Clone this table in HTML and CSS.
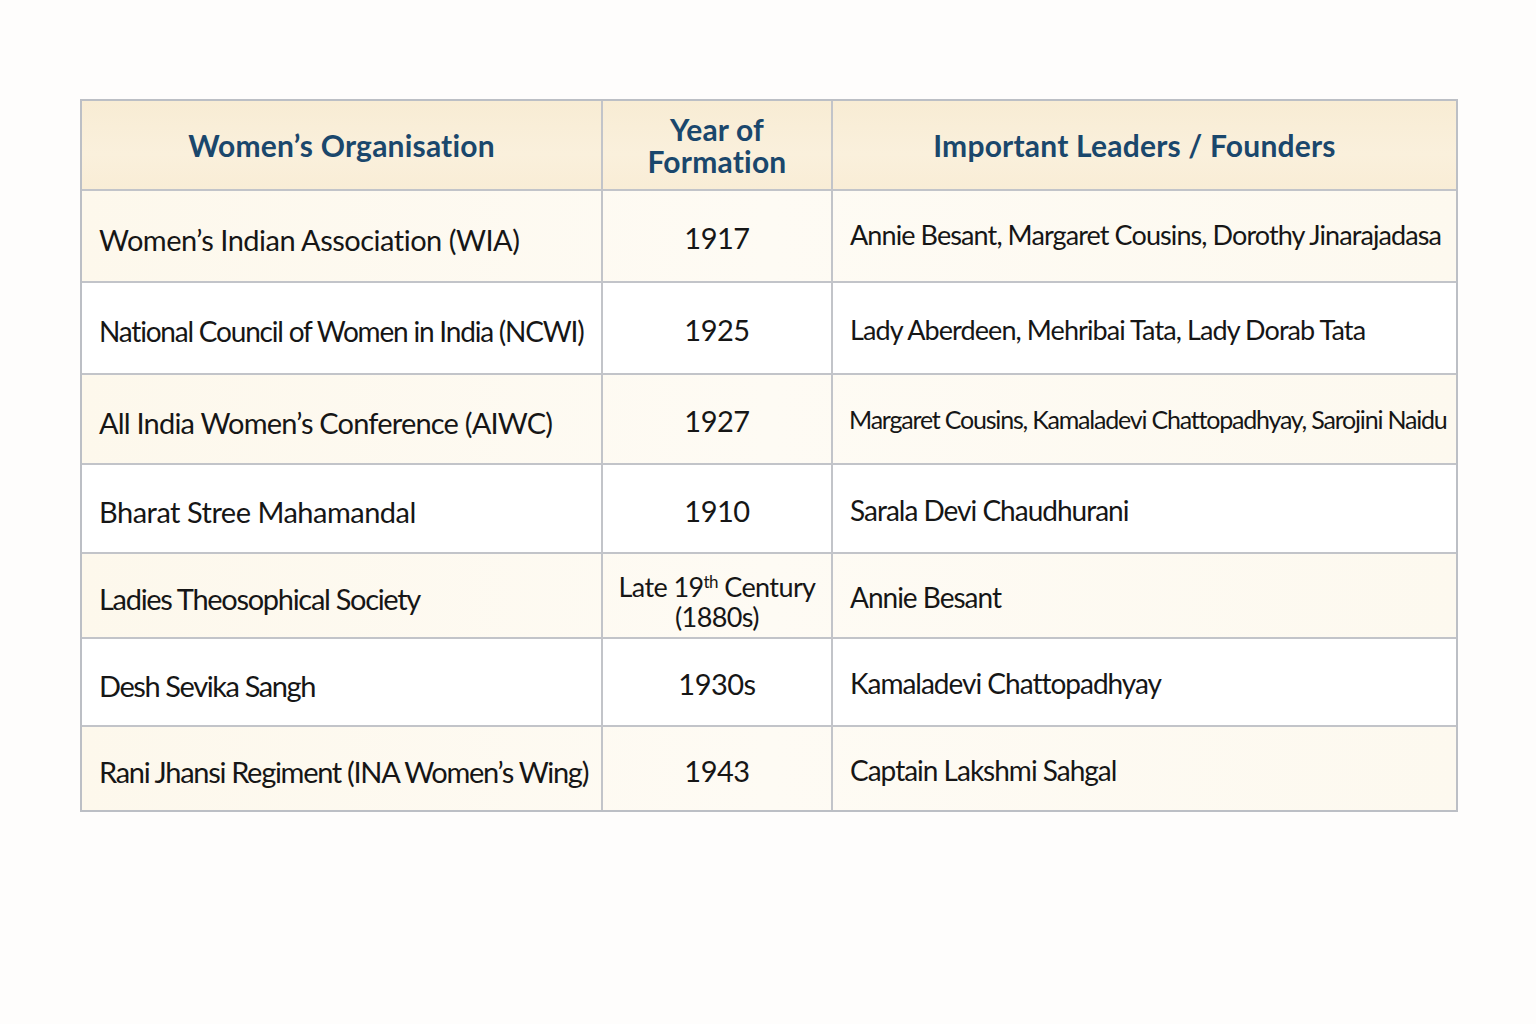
FILE: index.html
```html
<!DOCTYPE html>
<html lang="en">
<head>
<meta charset="utf-8">
<title>Women's Organisations</title>
<link rel="stylesheet" href="styles.css">
</head>
<body>
<div class="page">
  <div class="table">
    <div class="row head">
      <div class="cell c1"><span>Women’s Organisation</span></div>
      <div class="cell c2"><div class="stack"><span class="ln">Year of</span><span class="ln">Formation</span></div></div>
      <div class="cell c3"><span>Important Leaders / Founders</span></div>
    </div>
    <div class="row odd r1">
      <div class="cell c1"><span>Women’s Indian Association (WIA)</span></div>
      <div class="cell c2"><span>1917</span></div>
      <div class="cell c3 up cmp"><span>Annie Besant, Margaret Cousins, Dorothy Jinarajadasa</span></div>
    </div>
    <div class="row r2">
      <div class="cell c1 narrow"><span>National Council of Women in India (NCWI)</span></div>
      <div class="cell c2"><span>1925</span></div>
      <div class="cell c3 cmp"><span>Lady Aberdeen, Mehribai Tata, Lady Dorab Tata</span></div>
    </div>
    <div class="row odd r3">
      <div class="cell c1 t08"><span>All India Women’s Conference (AIWC)</span></div>
      <div class="cell c2"><span>1927</span></div>
      <div class="cell c3 small"><span>Margaret Cousins, Kamaladevi Chattopadhyay, Sarojini Naidu</span></div>
    </div>
    <div class="row r4">
      <div class="cell c1"><span>Bharat Stree Mahamandal</span></div>
      <div class="cell c2"><span>1910</span></div>
      <div class="cell c3"><span>Sarala Devi Chaudhurani</span></div>
    </div>
    <div class="row odd r5">
      <div class="cell c1 t13"><span>Ladies Theosophical Society</span></div>
      <div class="cell c2 two"><span>Late 19<sup>th</sup> Century<br>(1880s)</span></div>
      <div class="cell c3"><span>Annie Besant</span></div>
    </div>
    <div class="row r6">
      <div class="cell c1 t14"><span>Desh Sevika Sangh</span></div>
      <div class="cell c2"><span>1930s</span></div>
      <div class="cell c3"><span>Kamaladevi Chattopadhyay</span></div>
    </div>
    <div class="row odd r7">
      <div class="cell c1 t13"><span>Rani Jhansi Regiment (INA Women’s Wing)</span></div>
      <div class="cell c2"><span>1943</span></div>
      <div class="cell c3"><span>Captain Lakshmi Sahgal</span></div>
    </div>
  </div>
</div>
</body>
</html>
```
FILE: styles.css
```css
html, body {
  margin: 0;
  padding: 0;
  background: #fefdfc;
}
.page {
  width: 1536px;
  height: 1024px;
  padding: 99px 0 0 80px;
  box-sizing: border-box;
  font-family: Lato, "Open Sans", sans-serif;
  color: #161616;
}
.table {
  width: 1378px;
  border: 2px solid #bcbfc5;
  box-sizing: border-box;
}
.row {
  display: grid;
  grid-template-columns: 521px 230px 1fr;
  border-top: 2px solid #c2c4c9;
  background: #ffffff;
}
.row.head {
  border-top: none;
  height: 88px;
  background: linear-gradient(180deg, #f8ecd4 0%, #faf0dc 60%, #f9edd6 100%);
}
.row.odd {
  background: linear-gradient(90deg, #fdf8ec 0%, #fefbf4 50%, #fdf9ef 100%);
}
.r1 { height: 90px; }
.r2 { height: 90px; }
.r3 { height: 88px; }
.r4 { height: 87px; }
.r5 { height: 83px; }
.r6 { height: 86px; }
.r7 { height: 83px; }
.cell {
  display: flex;
  align-items: center;
  font-size: 29px;
  letter-spacing: -0.5px;
  line-height: 1;
  white-space: nowrap;
  padding-top: 6px;
  box-sizing: border-box;
}
.cell.c1 {
  padding-left: 17px;
  border-right: 2px solid #c2c4c9;
}
.cell.c2 {
  justify-content: center;
  text-align: center;
  border-right: 2px solid #c2c4c9;
  padding-top: 3px;
}
.cell.c3 {
  padding-left: 17px;
  padding-top: 2px;
  font-size: 28px;
  letter-spacing: -1px;
}
.cell.c1.narrow { font-size: 28px; letter-spacing: -1.2px; }
.cell.c1.t08 { letter-spacing: -0.8px; }
.cell.c1.t13 { letter-spacing: -1.3px; }
.cell.c1.t14 { letter-spacing: -1.4px; }
.cell.c3.cmp { font-size: 27px; letter-spacing: -0.9px; }
.cell.c3.small { font-size: 25px; letter-spacing: -1.2px; padding-left: 16px; padding-top: 0; }
.cell.c3.up { padding-top: 0; padding-bottom: 4px; }
.cell.c2.two {
  line-height: 30px;
  font-size: 27px;
  letter-spacing: -0.6px;
  padding-top: 12px;
}
.cell sup {
  font-size: 17px;
  vertical-align: 9px;
  line-height: 0;
}
.head .cell {
  justify-content: center;
  text-align: center;
  padding: 0;
  font-weight: 700;
  color: #1a476c;
  font-size: 30px;
  letter-spacing: 0.2px;
  line-height: 32px;
}
.head .cell.c2 { padding: 0; }
.head .cell.c3 { padding-right: 20px; padding-top: 0; }
.stack {
  display: flex;
  flex-direction: column;
  align-items: center;
}
.stack .ln {
  display: block;
  height: 32px;
  line-height: 32px;
}
```
